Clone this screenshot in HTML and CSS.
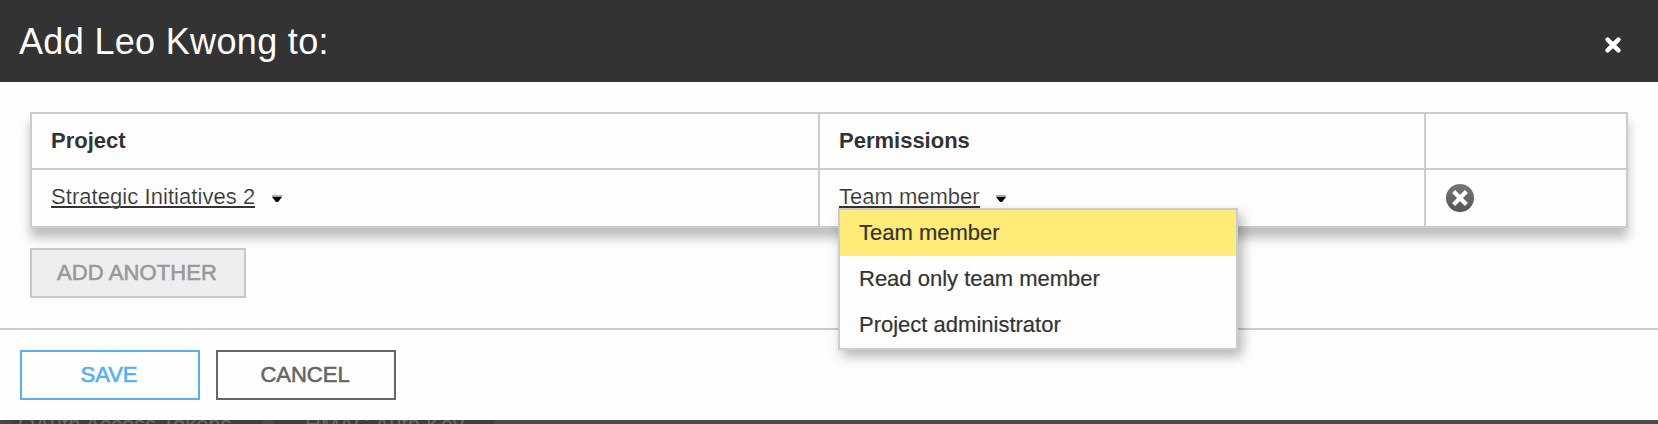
FILE: index.html
```html
<!DOCTYPE html>
<html lang="en">
<head>
<meta charset="utf-8">
<title>Add Leo Kwong to:</title>
<link rel="stylesheet" href="styles.css">
</head>
<body>
<section class="dialog">
  <header class="dialog-header">
    <h1 class="dialog-title">Add Leo Kwong to:</h1>
    <svg class="close" width="16" height="16" viewBox="0 0 16 16"><path d="M2.6 2.6L13.4 13.4M13.4 2.6L2.6 13.4"/></svg>
  </header>
  <div class="dialog-body">
    <div class="grid">
      <div class="cell head">Project</div>
      <div class="cell head">Permissions</div>
      <div class="cell head"></div>
      <div class="cell"><a class="link link-project">Strategic Initiatives 2</a><svg class="caret" width="10" height="8" viewBox="0 0 10 8"><path class="caret-top" d="M0 0H10V2H0Z"/><path d="M0 2H10L6 7H4Z"/></svg></div>
      <div class="cell picker"><a class="link">Team member</a><svg class="caret" width="10" height="8" viewBox="0 0 10 8"><path class="caret-top" d="M0 0H10V2H0Z"/><path d="M0 2H10L6 7H4Z"/></svg>
        <ul class="menu">
          <li class="option selected">Team member</li>
          <li class="option">Read only team member</li>
          <li class="option">Project administrator</li>
        </ul>
      </div>
      <div class="cell"><svg class="remove" width="28" height="28" viewBox="0 0 28 28">
        <defs><linearGradient id="disc" x1="0" y1="0" x2="0" y2="1"><stop offset="0" stop-color="#777"/><stop offset="1" stop-color="#555"/></linearGradient></defs>
        <circle cx="14" cy="14" r="14" fill="url(#disc)"/><path d="M7.6 7.6L20.4 20.4M20.4 7.6L7.6 20.4"/></svg></div>
    </div>
    <button class="button add">ADD ANOTHER</button>
  </div>
  <footer class="dialog-footer">
    <button class="button save">SAVE</button>
    <button class="button cancel">CANCEL</button>
  </footer>
</section>
<div class="backdrop"><span class="tab tokens">OAuth Access Tokens</span><span class="tab">HMAC Auth Key</span></div>
</body>
</html>
```
FILE: styles.css
```css
* { box-sizing: border-box; }
body {
  margin: 0;
  height: 424px;
  overflow: hidden;
  font: 22px/26px "Liberation Sans", Arial, sans-serif;
  color: #333;
}
.dialog { height: 420px; background: #fefefe; }
.dialog-header {
  display: flex;
  justify-content: space-between;
  height: 82px;
  padding: 0 37px 0 19px;
  background: #333;
}
.dialog-title {
  margin: 0;
  padding-top: 21px;
  font-size: 36px;
  line-height: 42px;
  font-weight: 400;
  letter-spacing: .33px;
  color: #fff;
  white-space: nowrap;
}
.close { margin-top: 37px; }
.close path { stroke: #fff; stroke-width: 4.4; stroke-linecap: round; }
.dialog-body { height: 248px; padding: 30px 30px 0; border-bottom: 2px solid #ccc; }
.grid {
  display: grid;
  grid-template-columns: 786px 606px 202px;
  grid-template-rows: 56px 56px;
  height: 116px;
  border: 2px solid #ccc;
  background: #fefefe;
  box-shadow: 0 10px 10px rgba(0, 0, 0, .25);
}
.cell { display: flex; padding: 12px 0 0 18px; border-left: 2px solid #ccc; white-space: nowrap; }
.cell:nth-child(3n + 1) { padding-left: 19px; border-left: 0; }
.cell.head { padding-top: 14px; border-bottom: 2px solid #ccc; font-weight: 700; }
.picker, .cell.head:nth-child(2) { padding-left: 19px; }
.link { height: 26px; line-height: 30px; border-bottom: 2px solid #333; -webkit-text-stroke: .2px #fefefe; }
.link-project { letter-spacing: .06px; }
.caret { margin: 13px 0 0 17px; }
.picker .caret { margin-left: 16px; }
.caret-top { fill: #aaa; }
.picker { position: relative; }
.menu {
  position: absolute;
  left: 18px;
  top: 38px;
  z-index: 2;
  width: 400px;
  margin: 0;
  padding: 0;
  list-style: none;
  border: 2px solid #ccc;
  background: #fefefe;
  box-shadow: 4px 6px 12px rgba(0, 0, 0, .3);
}
.option { height: 46px; padding: 10px 0 0 19px; -webkit-text-stroke: .2px currentColor; }
.selected { background: #ffeb77; }
.remove { margin: 2px 0 0 2px; }
.remove path { stroke: #fff; stroke-width: 4.2; }
.button {
  display: flex;
  justify-content: center;
  height: 50px;
  padding: 10px 0 0;
  font: inherit;
  border: 2px solid #666;
  background: #fefefe;
  color: #666;
  -webkit-text-stroke: .6px currentColor;
}
.add { width: 216px; margin-top: 20px; padding-right: 2px; border-color: #c8c8c8; background: #eee; color: #999; letter-spacing: .1px; }
.dialog-footer { display: flex; gap: 16px; padding: 20px; }
.save, .cancel { width: 180px; padding-right: 2px; }
.save { border-color: #56b0f2; color: #56b0f2; }
.backdrop {
  display: flex;
  height: 4px;
  overflow: hidden;
  background: linear-gradient(90deg, #4a4a4a 0, #3f3e3f 20px, #3f3e3f 262px, #4a4a4a 262px, #4a4a4a 274px, #3f3e3f 274px, #3f3e3f 494px, #4b4b4b 494px);
  color: #6a6a6a;
  line-height: 10px;
}
.tab { white-space: nowrap; }
.tokens { width: 305px; padding-left: 18px; }
```
